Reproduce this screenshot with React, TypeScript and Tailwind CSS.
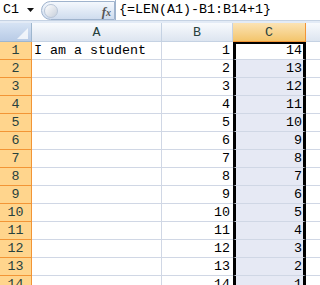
import React from "react";

const mono = { fontFamily: '"Liberation Mono", "DejaVu Sans Mono", monospace' };

export default function App() {
  const rows = Array.from({ length: 14 }, (_, i) => i + 1);
  return (
    <div className="w-[320px] h-[285px] overflow-hidden bg-white" style={mono}>
      {/* formula bar */}
      <div className="flex h-[21px] bg-white border-b border-[#c5d2e3]">
        <div className="w-[41px] flex items-center pl-[3px] text-[13.33px] text-black">
          <span>C1</span>
          <svg width="8" height="5" className="ml-[8px] mt-[1px]" viewBox="0 0 8 5"><path d="M0 0H7L3.5 4Z" fill="#111" /></svg>
        </div>
        <div className="w-[74px] h-[19px] mt-[1px] rounded-l-[10px] border border-[#9fb3cd] bg-gradient-to-b from-[#f4f8fd] to-[#cfdcee] flex items-center relative">
          <div className="w-[14px] h-[14px] ml-[2px] rounded-full border border-[#b9c6d8] bg-gradient-to-br from-white to-[#c7cfdb]" />
          <span className="absolute right-[3px] top-[0px] text-[13px] italic font-bold text-[#555]" style={{ fontFamily: '"Liberation Serif", serif' }}>
            f<span className="text-[10px]">x</span>
          </span>
        </div>
        <div className="flex-1 flex items-center pl-[3px] border-l border-[#9fb3cd] text-[13.33px] text-black whitespace-nowrap">
          {"{=LEN(A1)-B1:B14+1}"}
        </div>
      </div>
      <div className="h-[2px] bg-[#e3ebf6]" />
      {/* header row */}
      <div className="flex h-[19px] text-[13.33px] text-[#27413e]">
        <div className="w-[32px] border-r border-b border-[#9eb6ce] bg-gradient-to-b from-[#d6e3f4] to-[#b8cbe6] relative">
          <svg className="absolute right-[3px] bottom-[2px]" width="11" height="11" viewBox="0 0 11 11"><path d="M11 0V11H0Z" fill="#ffffff" opacity="0.75" /></svg>
        </div>
        <div className="w-[130px] border-r border-b border-[#c5d2e3] bg-gradient-to-b from-[#f8fafd] to-[#dde5f0] flex items-center justify-center pt-[1px]">A</div>
        <div className="w-[71px] border-r border-b border-[#c5d2e3] bg-gradient-to-b from-[#f8fafd] to-[#dde5f0] flex items-center justify-center pt-[1px]">B</div>
        <div className="w-[73px] border-r border-b border-[#f29536] bg-gradient-to-b from-[#fbe3b4] to-[#f3c56b] flex items-center justify-center pt-[1px]">C</div>
        <div className="flex-1 border-b border-[#c5d2e3] bg-gradient-to-b from-[#f8fafd] to-[#dde5f0]" />
      </div>
      {rows.map((r) => (
        <div key={r} className="flex h-[18px] text-[13.33px] leading-[16px]">
          <div className="w-[32px] border-r border-b border-[#f29536] bg-[#ffd58d] flex items-end justify-center text-[#27413e]">{r}</div>
          <div className="w-[130px] border-r border-b border-[#d0d7e5] flex items-end pl-[2px] whitespace-nowrap text-black">{r === 1 ? "I am a student" : ""}</div>
          <div className="w-[71px] border-b border-[#d0d7e5] flex items-end justify-end pr-[3px] text-black">{r}</div>
          <div className={`w-[73px] border-x-[3px] border-x-black border-b ${r === 1 ? "bg-white border-t-2 border-t-black" : "bg-[#e6e9f4]"} border-b-[#d0d7e5] flex items-end justify-end pr-[1px] text-black`}>{15 - r}</div>
          <div className="flex-1 border-b border-[#d0d7e5]" />
        </div>
      ))}
    </div>
  );
}
